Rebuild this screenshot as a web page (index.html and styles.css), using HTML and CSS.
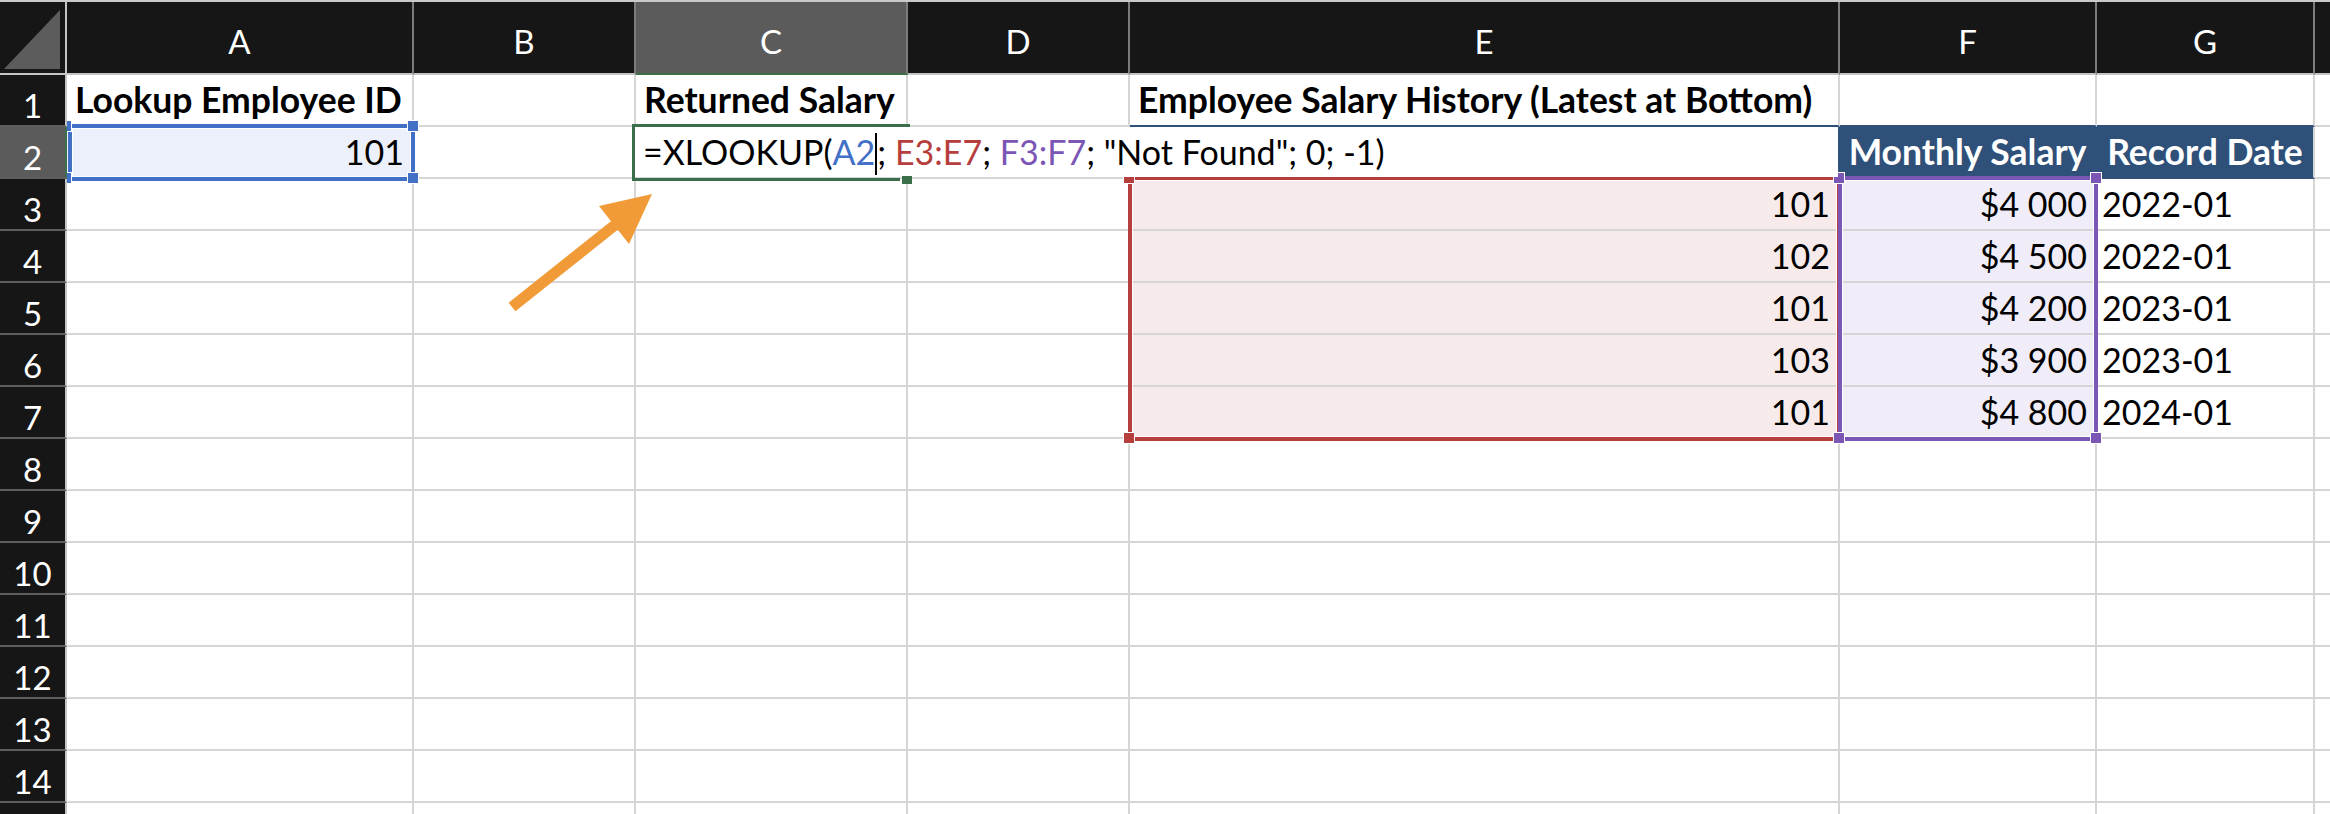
FILE: index.html
```html
<!DOCTYPE html>
<html lang="en">
<head>
<meta charset="utf-8">
<title>XLOOKUP</title>
<link rel="stylesheet" href="styles.css">
</head>
<body>
<div class="sheet">
  <div class="topline"></div>
  <div class="grid">
    <div class="corner"><svg class="corner-tri" width="65" height="71" viewBox="0 0 65 71"><polygon points="4,67 60,67 60,8" fill="#5c5c5c"/></svg></div>
    <div class="ch">A</div>
    <div class="ch">B</div>
    <div class="ch ch-active">C</div>
    <div class="ch">D</div>
    <div class="ch">E</div>
    <div class="ch">F</div>
    <div class="ch">G</div>
    <div class="ch ch-last"></div>

    <div class="rh">1</div>
    <div class="c b">Lookup Employee ID</div>
    <div class="c"></div>
    <div class="c b">Returned Salary</div>
    <div class="c"></div>
    <div class="c b under-blue">Employee Salary History (Latest at Bottom)</div>
    <div class="c under-blue"></div>
    <div class="c under-blue"></div>
    <div class="c"></div>

    <div class="rh rh-active">2</div>
    <div class="c r tint-blue">101</div>
    <div class="c"></div>
    <div class="c"></div>
    <div class="c"></div>
    <div class="c th"></div>
    <div class="c th th-mid">Monthly Salary</div>
    <div class="c th th-end">Record Date</div>
    <div class="c"></div>

    <div class="rh">3</div>
    <div class="c"></div><div class="c"></div><div class="c"></div><div class="c"></div>
    <div class="c r tint-red">101</div>
    <div class="c r tint-purple">$4 000</div>
    <div class="c g">2022-01</div>
    <div class="c"></div>

    <div class="rh">4</div>
    <div class="c"></div><div class="c"></div><div class="c"></div><div class="c"></div>
    <div class="c r tint-red">102</div>
    <div class="c r tint-purple">$4 500</div>
    <div class="c g">2022-01</div>
    <div class="c"></div>

    <div class="rh">5</div>
    <div class="c"></div><div class="c"></div><div class="c"></div><div class="c"></div>
    <div class="c r tint-red">101</div>
    <div class="c r tint-purple">$4 200</div>
    <div class="c g">2023-01</div>
    <div class="c"></div>

    <div class="rh">6</div>
    <div class="c"></div><div class="c"></div><div class="c"></div><div class="c"></div>
    <div class="c r tint-red">103</div>
    <div class="c r tint-purple">$3 900</div>
    <div class="c g">2023-01</div>
    <div class="c"></div>

    <div class="rh">7</div>
    <div class="c"></div><div class="c"></div><div class="c"></div><div class="c"></div>
    <div class="c r tint-red">101</div>
    <div class="c r tint-purple">$4 800</div>
    <div class="c g">2024-01</div>
    <div class="c"></div>

    <div class="rh">8</div>
    <div class="c"></div><div class="c"></div><div class="c"></div><div class="c"></div><div class="c"></div><div class="c"></div><div class="c"></div><div class="c"></div>
    <div class="rh">9</div>
    <div class="c"></div><div class="c"></div><div class="c"></div><div class="c"></div><div class="c"></div><div class="c"></div><div class="c"></div><div class="c"></div>
    <div class="rh">10</div>
    <div class="c"></div><div class="c"></div><div class="c"></div><div class="c"></div><div class="c"></div><div class="c"></div><div class="c"></div><div class="c"></div>
    <div class="rh">11</div>
    <div class="c"></div><div class="c"></div><div class="c"></div><div class="c"></div><div class="c"></div><div class="c"></div><div class="c"></div><div class="c"></div>
    <div class="rh">12</div>
    <div class="c"></div><div class="c"></div><div class="c"></div><div class="c"></div><div class="c"></div><div class="c"></div><div class="c"></div><div class="c"></div>
    <div class="rh">13</div>
    <div class="c"></div><div class="c"></div><div class="c"></div><div class="c"></div><div class="c"></div><div class="c"></div><div class="c"></div><div class="c"></div>
    <div class="rh">14</div>
    <div class="c"></div><div class="c"></div><div class="c"></div><div class="c"></div><div class="c"></div><div class="c"></div><div class="c"></div><div class="c"></div>
    <div class="rh"></div>
    <div class="c"></div><div class="c"></div><div class="c"></div><div class="c"></div><div class="c"></div><div class="c"></div><div class="c"></div><div class="c"></div>
  </div>

  <div class="overlay">
    <div class="sel sel-blue"></div>
    <div class="handle h-blue h-a-tl"></div>
    <div class="handle h-blue h-a-tr"></div>
    <div class="handle h-blue h-a-bl"></div>
    <div class="handle h-blue h-a-br"></div>

    <div class="sel sel-red"></div>
    <div class="sel sel-purple"></div>
    <div class="handle h-red h-e-tl"></div>
    <div class="handle h-red h-e-bl"></div>
    <div class="handle h-purple h-f-tl"></div>
    <div class="handle h-purple h-f-tr"></div>
    <div class="handle h-purple h-f-bl"></div>
    <div class="handle h-purple h-f-br"></div>

    <div class="edit"><span>=XLOOKUP(</span><span class="ref-a">A2</span><span class="caret"></span><span>; </span><span class="ref-e">E3:E7</span><span>; </span><span class="ref-f">F3:F7</span><span>; "Not Found"; 0; -1)</span></div>
    <div class="edit-frame"></div>
    <div class="edit-bottom"></div>
    <div class="fill-handle"></div>
  </div>

  <svg class="arrow" width="170" height="130" viewBox="0 0 170 130">
    <line x1="12" y1="122" x2="120" y2="36" stroke="#f19b38" stroke-width="11"/>
    <polygon points="152,9 99,21 129,59" fill="#f19b38"/>
  </svg>
</div>
</body>
</html>
```

FILE: styles.css
```css
* {
  box-sizing: border-box;
  margin: 0;
  padding: 0;
}

html, body {
  width: 2330px;
  height: 814px;
  overflow: hidden;
  background: #ffffff;
}

body {
  font-family: "Lato", "Liberation Sans", sans-serif;
  color: #000000;
}

.sheet {
  position: relative;
  width: 2330px;
  height: 814px;
  overflow: hidden;
}

.topline {
  height: 2px;
  background: #c9c9c9;
}

.grid {
  display: grid;
  grid-template-columns: 67px 347px 222px 272px 222px 710px 257px 218px 1fr;
  grid-template-rows: 73px repeat(15, 52px);
}

.corner {
  background: #161616;
  border-right: 2px solid #c4c4c4;
  border-bottom: 2px solid #c4c4c4;
}

.corner-tri {
  display: block;
}

.ch {
  background: #161616;
  color: #ffffff;
  font-size: 33px;
  display: flex;
  align-items: center;
  justify-content: center;
  padding-top: 6px;
  border-right: 2px solid #7c7c7c;
  border-bottom: 2px solid #c4c4c4;
}

.ch-active {
  background: #5b5b5b;
  border-bottom-color: #3b6e4a;
}

.rh {
  background: #161616;
  color: #ffffff;
  font-size: 33px;
  display: flex;
  align-items: center;
  justify-content: center;
  padding-top: 9px;
  border-right: 2px solid #c4c4c4;
  border-bottom: 2px solid #5e5e5e;
}

.rh-active {
  background: #5b5b5b;
  border-right-color: #3b6e4a;
}

.c {
  display: flex;
  align-items: flex-end;
  padding: 0 8px 5px 8px;
  font-size: 34px;
  line-height: 40px;
  white-space: nowrap;
  border-right: 2px solid #d6d6d6;
  border-bottom: 2px solid #d6d6d6;
}

.b {
  font-weight: 700;
  font-size: 35.5px;
}

.r {
  justify-content: flex-end;
}

.g {
  padding-left: 5px;
}

.under-blue {
  border-bottom-color: #2e5079;
}

.tint-blue {
  background: #ebf0fa;
}

.tint-red {
  background: #f6ebea;
}

.tint-purple {
  background: #f0edf8;
}

.th {
  background: #2e5079;
  color: #ffffff;
  font-weight: 700;
  font-size: 35.5px;
  justify-content: center;
  border-bottom-color: #2e5079;
  border-right-color: #2e5079;
}

.th-end {
  border-right-color: #d6d6d6;
}

/* overlays (selection boxes, edit box) */
.overlay {
  position: absolute;
  left: 67px;
  top: 75px;
  right: 0;
  bottom: 0;
  overflow: hidden;
  pointer-events: none;
}

.sel {
  position: absolute;
  border: 4px solid;
  box-shadow: inset 0 0 0 1px #ffffff;
}

.sel-blue {
  left: 1px;
  top: 49px;
  width: 347px;
  height: 57px;
  border-color: #4270c6;
}

.sel-red {
  left: 1061px;
  top: 101px;
  width: 713px;
  height: 265px;
  border-color: #b63f3e;
}

.sel-purple {
  left: 1771px;
  top: 101px;
  width: 260px;
  height: 265px;
  border-color: #7c56b5;
}

.handle {
  position: absolute;
  width: 12px;
  height: 12px;
  border: 1px solid #ffffff;
}

.h-blue { background: #4270c6; }
.h-red { background: #b63f3e; }
.h-purple { background: #7c56b5; }

.h-a-tl { left: -7px; top: 45px; }
.h-a-tr { left: 340px; top: 45px; }
.h-a-bl { left: -7px; top: 97px; }
.h-a-br { left: 340px; top: 97px; }

.h-e-tl { left: 1056px; top: 97px; }
.h-e-bl { left: 1056px; top: 357px; }
.h-f-tl { left: 1766px; top: 97px; }
.h-f-tr { left: 2023px; top: 97px; }
.h-f-bl { left: 1766px; top: 357px; }
.h-f-br { left: 2023px; top: 357px; }

.edit {
  position: absolute;
  left: 568px;
  top: 52px;
  width: 1203px;
  height: 50px;
  background: #ffffff;
  display: flex;
  align-items: flex-end;
  padding: 0 0 5px 8px;
  font-size: 34px;
  line-height: 40px;
  white-space: pre;
  color: #000000;
}

.ref-a { color: #4270c6; }
.ref-e { color: #b63f3e; }
.ref-f { color: #7c56b5; }

.caret {
  display: inline-block;
  width: 2px;
  height: 42px;
  background: #000000;
  margin-bottom: -3px;
  align-self: flex-end;
}

.edit-frame {
  position: absolute;
  left: 565px;
  top: 49px;
  width: 278px;
  height: 57px;
  border-top: 3px solid #3b6e4a;
  border-left: 3px solid #3b6e4a;
}

.edit-bottom {
  position: absolute;
  left: 565px;
  top: 103px;
  width: 268px;
  height: 3px;
  background: #3b6e4a;
}

.fill-handle {
  position: absolute;
  left: 835px;
  top: 101px;
  width: 10px;
  height: 8px;
  background: #3b6e4a;
}

.arrow {
  position: absolute;
  left: 500px;
  top: 185px;
  pointer-events: none;
}
```
